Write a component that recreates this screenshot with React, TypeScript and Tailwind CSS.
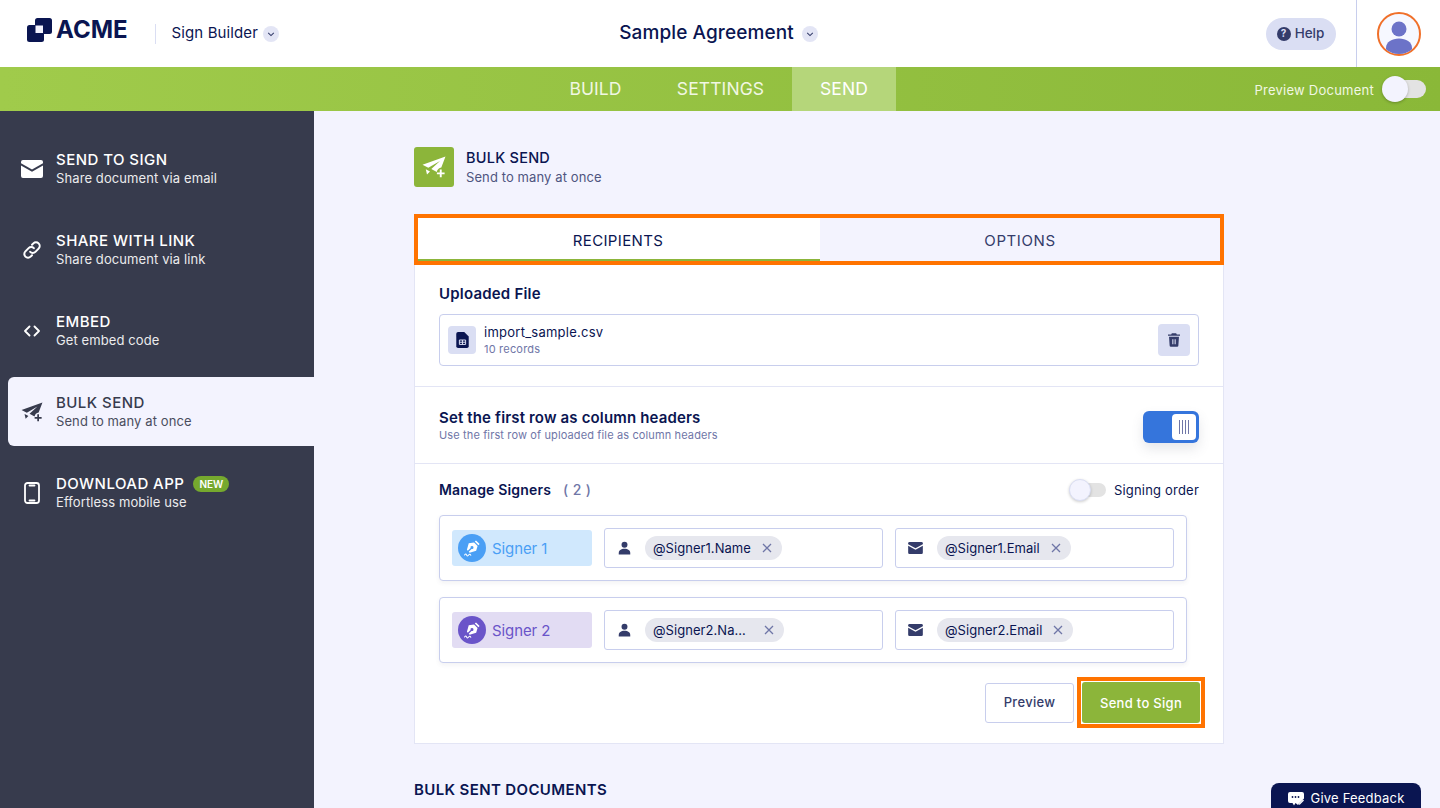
import React from "react";

function Plane({ className }: { className?: string }) {
  return (
    <svg viewBox="0 0 24 22" className={className} fill="currentColor">
      <path d="M23.500.500.500 8.800l5.800 3L18 5 9.300 13l5.500 2.900c.4-2.200 2.200-4 4.500-4.300L23.500.500Z" />
      <path d="M3.800 13.200 6.600 14.700 8 15.500 5 18.500l-1.200-5.300Z" />
      <path d="M17.800 13.500h1.900v2.900h2.900v1.900h-2.900v2.900h-1.900v-2.900h-2.900v-1.900h2.900v-2.900Z" />
    </svg>
  );
}

function MailIcon({ className }: { className?: string }) {
  return (
    <svg viewBox="0 0 22 18" className={className} fill="currentColor">
      <path d="M2 0h18a2 2 0 0 1 2 2v1.200l-11 6.200L0 3.200V2a2 2 0 0 1 2-2Z" />
      <path d="M0 5.600 11 11.800l11-6.200V16a2 2 0 0 1-2 2H2a2 2 0 0 1-2-2V5.600Z" />
    </svg>
  );
}

function PersonIcon({ className }: { className?: string }) {
  return (
    <svg viewBox="0 0 14 14" className={className} fill="currentColor">
      <circle cx="7" cy="3.400" r="3.200" />
      <path d="M.8 14v-1.600C.8 9.600 3.200 7.800 7 7.800s6.200 1.800 6.200 4.600V14H.8Z" />
    </svg>
  );
}

function Nib({ className }: { className?: string }) {
  return (
    <svg viewBox="0 0 28 28" className={className}>
      <g fill="#fff">
        <path d="m18.300 5.800 3.900 3.900-1.300 1.300-3.900-3.900 1.300-1.300Z" />
        <path fillRule="evenodd" d="m16.200 8 3.800 3.800-1.500 5.200-7 2-1-1 3-3a1.600 1.600 0 1 0-1-1l-3 3-1-1 2-7 5.700-1Z" />
      </g>
      <path d="M6 21.500c1-1.500 1.500-1.500 2.200 0s1.300 1.200 2.200 0 1.500-.8 2.300.3" fill="none" stroke="#fff" strokeWidth="1.100" strokeLinecap="round" />
    </svg>
  );
}

function Chevron() {
  return (
    <svg viewBox="0 0 10 10" className="h-[8px] w-[8px]" fill="none" stroke="#343c6a" strokeWidth="1.300">
      <path d="m1.500 3.500 3.500 3.500 3.500-3.500" />
    </svg>
  );
}

function NavItem({
  icon,
  title,
  sub,
  active,
  badge,
}: {
  icon: React.ReactNode;
  title: string;
  sub: string;
  active?: boolean;
  badge?: boolean;
}) {
  return (
    <div
      className={`ml-2 flex h-[69px] items-center rounded-l-[6px] pl-[13px] ${
        active ? "bg-[#f3f3fe] text-[#373b4d]" : "text-white"
      }`}
    >
      <div className="flex w-[22px] justify-center">{icon}</div>
      <div className="ml-[13px]">
        <div className="flex h-[20px] items-center pt-[1px] text-[15px] leading-[20px] font-medium tracking-[0.45px]">
          {title}
          {badge && (
            <span className="ml-[9px] flex h-[16px] w-[36px] items-center justify-center rounded-full bg-[#76a92e] text-[10px] font-semibold tracking-normal text-white">
              NEW
            </span>
          )}
        </div>
        <div className="text-[13px] leading-[19px] tracking-[0.1px] opacity-90">{sub}</div>
      </div>
    </div>
  );
}

function Chip({ label, wide }: { label: string; wide?: boolean }) {
  return (
    <div className="flex h-[24px] items-center rounded-full bg-[#e6e7ee] pl-[8px] pr-[10px] text-[13px] tracking-[0.05px] text-[#0a1551]">
      <span className={`pt-[1px] ${wide ? "w-[100px] truncate" : ""}`}>{label}</span>
      <svg viewBox="0 0 10 10" className="ml-[11px] h-[10px] w-[10px] text-[#6f76a7]" fill="none" stroke="currentColor" strokeWidth="1.300">
        <path d="m1 1 8 8M9 1 1 9" />
      </svg>
    </div>
  );
}

function SignerRow({
  name,
  badgeBg,
  color,
  circle,
  nameChip,
  emailChip,
  truncateName,
}: {
  name: string;
  badgeBg: string;
  color: string;
  circle: string;
  nameChip: string;
  emailChip: string;
  truncateName?: boolean;
}) {
  return (
    <div className="flex h-[66px] w-[748px] items-center gap-[12px] rounded-[4px] border border-[#c8ceed] bg-white pl-[12px] shadow-[0_2px_4px_rgba(84,95,111,0.08)]">
      <div className={`flex h-[36px] w-[140px] items-center rounded-[3px] pl-[6px] ${badgeBg}`}>
        <div className={`flex h-[28px] w-[28px] items-center justify-center rounded-full ${circle}`}>
          <Nib className="h-[26px] w-[26px]" />
        </div>
        <span className={`ml-[6px] pt-[2px] text-[15px] tracking-[-0.1px] ${color}`}>{name}</span>
      </div>
      <div className="flex h-[40px] w-[279px] items-center rounded-[3px] border border-[#c8ceed] pl-[13px]">
        <PersonIcon className="h-[14px] w-[13px] text-[#343c6a]" />
        <div className="ml-[14px]">
          <Chip label={nameChip} wide={truncateName} />
        </div>
      </div>
      <div className="flex h-[40px] w-[279px] items-center rounded-[3px] border border-[#c8ceed] pl-[12px]">
        <MailIcon className="h-[12px] w-[15px] text-[#343c6a]" />
        <div className="ml-[14px]">
          <Chip label={emailChip} />
        </div>
      </div>
    </div>
  );
}

export default function App() {
  return (
    <div className="relative flex h-[808px] w-[1440px] flex-col overflow-hidden bg-[#f3f3fe] font-['Inter',sans-serif] text-[#0a1551]">
      {/* Header */}
      <header className="flex h-[67px] shrink-0 items-center bg-white">
        <div className="flex w-[480px] items-center pl-[27px]">
          <div className="mb-[7px] flex items-center">
            <svg viewBox="0 0 25 24" className="h-[24px] w-[25px]">
              <rect x="8" y="0" width="17" height="16" rx="2.500" fill="#0a1551" />
              <rect x="0" y="7" width="17" height="17" rx="2.500" fill="#0a1551" />
              <rect x="8.500" y="7.500" width="7.500" height="7.500" fill="#f3f3fe" />
            </svg>
            <span className="ml-[4px] text-[24px] leading-none font-bold tracking-[0px]">ACME</span>
          </div>
          <div className="ml-[27px] h-[20px] w-px bg-[#dadef3]" />
          <span className="ml-[16px] text-[15px] tracking-[0.1px] text-[#0a1551]">Sign Builder</span>
          <div className="ml-[5px] flex h-[16px] w-[16px] items-center justify-center rounded-full bg-[#e3e5f5]">
            <Chevron />
          </div>
        </div>
        <div className="flex w-[480px] items-center justify-center pr-[3px]">
          <span className="text-[19px] font-medium tracking-[0.1px]">Sample Agreement</span>
          <div className="ml-[8px] flex h-[16px] w-[16px] items-center justify-center rounded-full bg-[#e3e5f5]">
            <Chevron />
          </div>
        </div>
        <div className="flex h-full flex-1 items-center justify-end">
          <div className="mr-[20px] flex h-[32px] w-[70px] items-center justify-center rounded-full bg-[#dadef3] pr-[1px]">
            <div className="flex h-[14px] w-[14px] items-center justify-center rounded-full bg-[#343c6a] text-[10px] font-bold text-[#dadef3]">?</div>
            <span className="ml-[4px] text-[13.5px] font-medium text-[#343c6a]">Help</span>
          </div>
          <div className="h-full w-px bg-[#c8ceed]" />
          <div className="ml-[20px] mr-[19px] flex h-[44px] w-[44px] items-end justify-center overflow-hidden rounded-full border-2 border-[#f0702a] bg-[#f6f8ff]">
            <svg viewBox="0 0 40 40" className="h-[40px] w-[40px]" fill="#6c73c8">
              <circle cx="20" cy="15" r="7.500" />
              <path d="M7 40v-6c0-6 6-9.500 13-9.500s13 3.500 13 9.500v6H7Z" />
            </svg>
          </div>
        </div>
      </header>

      {/* Green bar */}
      <div className="flex h-[44px] shrink-0 items-center bg-gradient-to-r from-[#a0cb4b] to-[#8ab838] pr-[14px] text-white">
        <nav className="ml-[542px] flex h-full items-center text-[17.5px] tracking-[0.1px]">
          <div className="flex h-full w-[107px] items-center justify-center text-[#f1f7e3]">BUILD</div>
          <div className="flex h-full w-[143px] items-center justify-center text-[#f1f7e3]">SETTINGS</div>
          <div className="flex h-full w-[104px] items-center justify-center bg-[#b5d67a]">SEND</div>
        </nav>
        <div className="ml-auto flex items-center">
          <span className="pt-[3px] text-[13px] tracking-[0.25px] text-[#f1f7e3]">Preview Document</span>
          <div className="relative ml-[8px] h-[18px] w-[44px]">
            <div className="absolute top-0 right-0 h-[18px] w-[36px] rounded-full bg-[#e3e3e3]" />
            <div className="absolute -top-[4px] left-0 h-[26px] w-[26px] rounded-full bg-[#f3f3fe] shadow-[0_1px_3px_rgba(0,0,0,0.25)]" />
          </div>
        </div>
      </div>

      <div className="flex flex-1 overflow-hidden">
        {/* Sidebar */}
        <aside className="flex w-[314px] shrink-0 flex-col gap-[12px] bg-[#373b4d] pt-[23px]">
          <NavItem icon={<MailIcon className="h-[18px] w-[22px]" />} title="SEND TO SIGN" sub="Share document via email" />
          <NavItem
            icon={
              <svg viewBox="0 0 24 24" className="h-[22px] w-[22px]" fill="none" stroke="currentColor" strokeWidth="2.200" strokeLinecap="round">
                <path d="M10 14a4 4 0 0 0 5.700 0l3.500-3.500a4 4 0 0 0-5.700-5.700l-1.500 1.500" />
                <path d="M14 10a4 4 0 0 0-5.700 0l-3.500 3.500a4 4 0 0 0 5.700 5.700l1.500-1.500" />
              </svg>
            }
            title="SHARE WITH LINK"
            sub="Share document via link"
          />
          <NavItem
            icon={
              <svg viewBox="0 0 16 12" className="h-[12px] w-[16px]" fill="none" stroke="currentColor" strokeWidth="1.800" strokeLinecap="round" strokeLinejoin="round">
                <path d="M5.500 1.500 1 6l4.500 4.500M10.500 1.500 15 6l-4.500 4.500" />
              </svg>
            }
            title="EMBED"
            sub="Get embed code"
          />
          <NavItem active icon={<Plane className="h-[20px] w-[22px]" />} title="BULK SEND" sub="Send to many at once" />
          <NavItem
            badge
            icon={
              <svg viewBox="0 0 16 22" className="h-[22px] w-[16px]" fill="none" stroke="currentColor" strokeWidth="1.800">
                <rect x="1" y="1" width="14" height="20" rx="2.500" />
                <path d="M5.500 3.500h5M5.500 18.500h5" strokeLinecap="round" />
              </svg>
            }
            title="DOWNLOAD APP"
            sub="Effortless mobile use"
          />
        </aside>

        {/* Main */}
        <main className="flex-1 pl-[100px] pt-[36px]">
          <div className="w-[810px]">
            <div className="flex items-center">
              <div className="flex h-[40px] w-[40px] items-center justify-center rounded-[3px] bg-[#8cb53a] text-white">
                <Plane className="h-[22px] w-[24px]" />
              </div>
              <div className="ml-[12px]">
                <div className="pt-[1px] text-[14.5px] leading-[20px] font-medium tracking-[0.25px]">BULK SEND</div>
                <div className="text-[13px] leading-[19px] tracking-[0.1px] text-[#4f5580]">Send to many at once</div>
              </div>
            </div>

            <div className="mt-[27px] flex h-[51px] border-4 border-[#ff7300]">
              <div className="flex flex-1 items-center justify-center border-b-2 border-[#8cb53a] bg-white pt-[5px] pr-[2px] text-[15px] tracking-[0.35px]">RECIPIENTS</div>
              <div className="flex flex-1 items-center justify-center bg-[#f3f3fe] pt-[3px] text-[15px] tracking-[0.6px] text-[#343c6a]">OPTIONS</div>
            </div>

            <div className="h-[479px] border border-t-0 border-[#e3e5f5] bg-white">
              <div className="h-[122px] border-b border-[#e3e5f5] px-[24px] pt-[19px]">
                <div className="text-[15px] leading-[20px] font-semibold tracking-[0.2px]">Uploaded File</div>
                <div className="mt-[10px] flex h-[52px] items-center rounded-[4px] border border-[#c8ceed] pl-[8px] pr-[8px]">
                  <div className="flex h-[28px] w-[28px] items-center justify-center rounded-[4px] bg-[#dadef3]">
                    <svg viewBox="0 0 14 18" className="h-[16px] w-[13px]">
                      <path d="M2 0h7l5 5v11a2 2 0 0 1-2 2H2a2 2 0 0 1-2-2V2a2 2 0 0 1 2-2Z" fill="#0a1551" />
                      <path d="M3.500 9h7v5h-7zM7 9v5M3.500 11.500h7" stroke="#dadef3" strokeWidth="1.100" fill="none" />
                    </svg>
                  </div>
                  <div className="ml-[8px]">
                    <div className="text-[13px] leading-[17px] tracking-[0.25px]">import_sample.csv</div>
                    <div className="pt-[1px] text-[11px] leading-[15px] tracking-[0.2px] text-[#6f76a7]">10 records</div>
                  </div>
                  <div className="ml-auto flex h-[32px] w-[32px] items-center justify-center rounded-[4px] bg-[#dadef3]">
                    <svg viewBox="0 0 14 16" className="h-[14px] w-[12px]" fill="#343c6a">
                      <path d="M4.500 0h5l.8 1.500H14V3H0V1.500h3.700L4.500 0Z" />
                      <path fillRule="evenodd" d="M1.200 4.200h11.600l-.7 10.300a1.500 1.500 0 0 1-1.500 1.500H3.400a1.500 1.500 0 0 1-1.500-1.500L1.200 4.200ZM5 7v6h1.300V7H5Zm2.700 0v6H9V7H7.700Z" />
                    </svg>
                  </div>
                </div>
              </div>

              <div className="flex h-[77px] items-center justify-between border-b border-[#e3e5f5] px-[24px]">
                <div>
                  <div className="text-[15px] leading-[20px] font-semibold tracking-[0.15px]">Set the first row as column headers</div>
                  <div className="text-[11px] leading-[14px] tracking-[0.13px] text-[#6f76a7]">Use the first row of uploaded file as column headers</div>
                </div>
                <div className="mt-[4px] flex h-[32px] w-[56px] items-center justify-end rounded-[6px] bg-[#3575dc] pr-[3px] shadow-[0_6px_12px_rgba(84,95,111,0.15)]">
                  <div className="flex h-[26px] w-[24px] items-center justify-center gap-[2px] rounded-[4px] bg-white">
                    <span className="h-[14px] w-px bg-[#6f76a7]" />
                    <span className="h-[14px] w-px bg-[#6f76a7]" />
                    <span className="h-[14px] w-px bg-[#6f76a7]" />
                    <span className="h-[14px] w-px bg-[#6f76a7]" />
                  </div>
                </div>
              </div>

              <div className="px-[24px] pt-[16px]">
                <div className="flex h-[20px] items-center justify-between">
                  <div className="flex items-center pb-[2px]">
                    <span className="text-[14px] font-semibold tracking-[0.16px]">Manage Signers</span>
                    <span className="ml-[12px] text-[14px] font-medium tracking-[0.4px] text-[#6f76a7]">( 2 )</span>
                  </div>
                  <div className="flex items-center">
                    <div className="relative ml-[1px] h-[14px] w-[37px]">
                      <div className="absolute top-0 right-0 h-[14px] w-[28px] rounded-full bg-[#e3e3e3]" />
                      <div className="absolute -top-[4px] left-0 h-[22px] w-[22px] rounded-full border border-[#dadef3] bg-[#f3f3fe] shadow-[0_1px_3px_rgba(0,0,0,0.2)]" />
                    </div>
                    <span className="ml-[8px] pt-[1px] text-[13px] tracking-[0.2px]">Signing order</span>
                  </div>
                </div>
                <div className="mt-[15px] flex flex-col gap-[16px]">
                  <SignerRow name="Signer 1" badgeBg="bg-[#d0e8fd]" color="text-[#4a9ff5]" circle="bg-[#4a9ff5]" nameChip="@Signer1.Name" emailChip="@Signer1.Email" />
                  <SignerRow name="Signer 2" badgeBg="bg-[#e2dcf3]" color="text-[#6a54c9]" circle="bg-[#6a54c9]" nameChip="@Signer2.Name" emailChip="@Signer2.Email" truncateName />
                </div>
                <div className="mt-[14px] flex items-center justify-end">
                  <div className="flex h-[40px] w-[89px] items-center justify-center rounded-[3px] border border-[#c8ceed] bg-white pt-[1px] text-[13px] font-medium tracking-[0.3px] text-[#343c6a]">Preview</div>
                  <div className="ml-[3px] mr-[-6px] border-4 border-[#ff7300] bg-white p-px">
                    <div className="flex h-[41px] w-[118px] items-center justify-center rounded-[3px] bg-[#8cb53a] pt-[3px] text-[13px] font-medium tracking-[0.3px] text-white">Send to Sign</div>
                  </div>
                </div>
              </div>
            </div>

            <div className="mt-[36px] text-[15px] leading-[20px] font-semibold tracking-[0.37px]">BULK SENT DOCUMENTS</div>
          </div>
        </main>
      </div>

      <div className="absolute bottom-0 left-[1271px] flex h-[25px] w-[150px] items-center justify-center rounded-t-[8px] bg-[#0a1551] pt-[7px] text-white">
        <svg viewBox="0 0 16 14" className="h-[14px] w-[16px]">
          <path d="M2 0h12a2 2 0 0 1 2 2v4.500L10.500 12l-.5 1L7.500 11 6 13.500 4.500 11H2a2 2 0 0 1-2-2V2a2 2 0 0 1 2-2Z" fill="#fff" />
          <circle cx="4.500" cy="5" r=".9" fill="#0a1551" />
          <circle cx="7.500" cy="5" r=".9" fill="#0a1551" />
          <circle cx="10.500" cy="5" r=".9" fill="#0a1551" />
          <path d="m15 7.500 1 1-4 4-1.500.5.500-1.500 4-4Z" fill="#fff" />
        </svg>
        <span className="ml-[7px] text-[13px] tracking-[0.2px]">Give Feedback</span>
      </div>
    </div>
  );
}
